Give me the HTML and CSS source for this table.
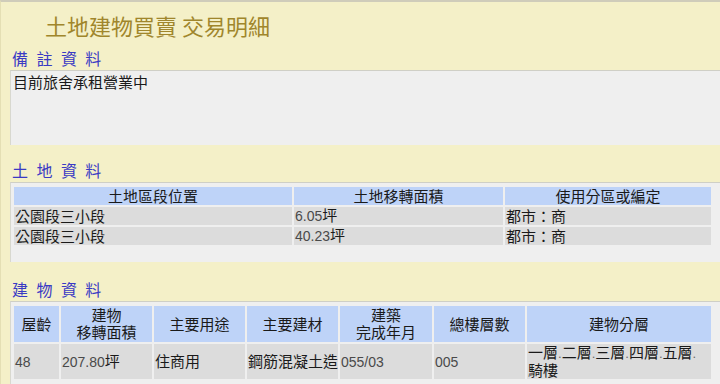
FILE: index.html
```html
<!DOCTYPE html>
<html lang="zh-Hant">
<head>
<meta charset="utf-8">
<title>土地建物買賣 交易明細</title>
<link rel="stylesheet" href="styles.css">
</head>
<body>
<div class="page">
  <h1 class="title">土地建物買賣 交易明細</h1>

  <h2 class="section-title">備 註 資 料</h2>
  <div class="box box-notes">
    <p class="note">目前旅舍承租營業中</p>
  </div>

  <h2 class="section-title">土 地 資 料</h2>
  <div class="box box-land">
    <table class="grid grid-land">
      <colgroup>
        <col class="c-land1"><col class="c-land2"><col class="c-land3">
      </colgroup>
      <thead>
        <tr><th>土地區段位置</th><th>土地移轉面積</th><th>使用分區或編定</th></tr>
      </thead>
      <tbody>
        <tr><td>公園段三小段</td><td><span class="num">6.05</span>坪</td><td>都市：商</td></tr>
        <tr><td>公園段三小段</td><td><span class="num">40.23</span>坪</td><td>都市：商</td></tr>
      </tbody>
    </table>
  </div>

  <h2 class="section-title">建 物 資 料</h2>
  <div class="box box-building">
    <table class="grid grid-building">
      <colgroup>
        <col class="c-b1"><col class="c-b2"><col class="c-b3"><col class="c-b4"><col class="c-b5"><col class="c-b6"><col class="c-b7">
      </colgroup>
      <thead>
        <tr>
          <th>屋齡</th>
          <th>建物<br>移轉面積</th>
          <th>主要用途</th>
          <th>主要建材</th>
          <th>建築<br>完成年月</th>
          <th>總樓層數</th>
          <th>建物分層</th>
        </tr>
      </thead>
      <tbody>
        <tr>
          <td><span class="num">48</span></td>
          <td><span class="num">207.80</span>坪</td>
          <td>住商用</td>
          <td>鋼筋混凝土造</td>
          <td><span class="num">055/03</span></td>
          <td><span class="num">005</span></td>
          <td>一層<span class="dot">.</span>二層<span class="dot">.</span>三層<span class="dot">.</span>四層<span class="dot">.</span>五層<span class="dot">.</span><br>騎樓</td>
        </tr>
      </tbody>
    </table>
  </div>
</div>
</body>
</html>
```

FILE: styles.css
```css
html, body {
  margin: 0;
  padding: 0;
}

body {
  background: #f4f0c8;
  font-family: "Liberation Sans", "Noto Sans CJK TC", sans-serif;
  color: #1a1a1a;
  overflow: hidden;
}

.page {
  width: 720px;
  height: 384px;
  box-sizing: border-box;
  border-top: 2px solid #cfccba;
  border-left: 1px solid #e4dfb4;
  overflow: hidden;
}

.title {
  margin: 10px 0 13px 44px;
  font-size: 22px;
  line-height: 26px;
  font-weight: normal;
  color: #a0862c;
  font-family: "Noto Sans CJK TC", sans-serif;
}

.section-title {
  margin: 0 0 1px 11px;
  font-size: 16px;
  line-height: 18px;
  font-weight: normal;
  color: #3a3ac4;
  word-spacing: 4px;
}

.box {
  margin-left: 9px;
  background: #efefef;
  border-top: 1px solid #cfcfc6;
  border-left: 1px solid #d8d8cf;
  box-sizing: border-box;
}

.box-notes {
  height: 75px;
  margin-bottom: 18px;
  padding: 3px 0 0 2px;
}

.note {
  margin: 0;
  font-size: 15px;
  line-height: 17px;
}

.box-land {
  height: 80px;
  margin-bottom: 20px;
  padding: 2px 0 0 1px;
}

.box-building {
  height: 90px;
  padding: 2px 0 0 1px;
}

.grid {
  border-collapse: separate;
  border-spacing: 2px;
  table-layout: fixed;
  font-size: 15px;
  line-height: 17px;
}

.grid-land {
  width: 701px;
}

.grid-building {
  width: 701px;
}

.grid th {
  background: #bed3f8;
  font-weight: normal;
  padding: 0;
  text-align: center;
  vertical-align: middle;
}

.grid td {
  background: #dcdcdc;
  padding: 0 1px;
  text-align: left;
  vertical-align: middle;
  white-space: nowrap;
}

.grid-land th,
.grid-land td {
  height: 18px;
}

.grid-building th {
  height: 36px;
}

.grid-building td {
  height: 34px;
}

.c-land1 { width: 278px; }
.c-land2 { width: 209px; }
.c-land3 { width: 206px; }

.c-b1 { width: 45px; }
.c-b2 { width: 91px; }
.c-b3 { width: 91px; }
.c-b4 { width: 91px; }
.c-b5 { width: 92px; }
.c-b6 { width: 91px; }
.c-b7 { width: 184px; }

.num {
  color: #4a4a4a;
  font-size: 14px;
}

.dot {
  color: #6a6a6a;
  font-size: 13px;
}
```
